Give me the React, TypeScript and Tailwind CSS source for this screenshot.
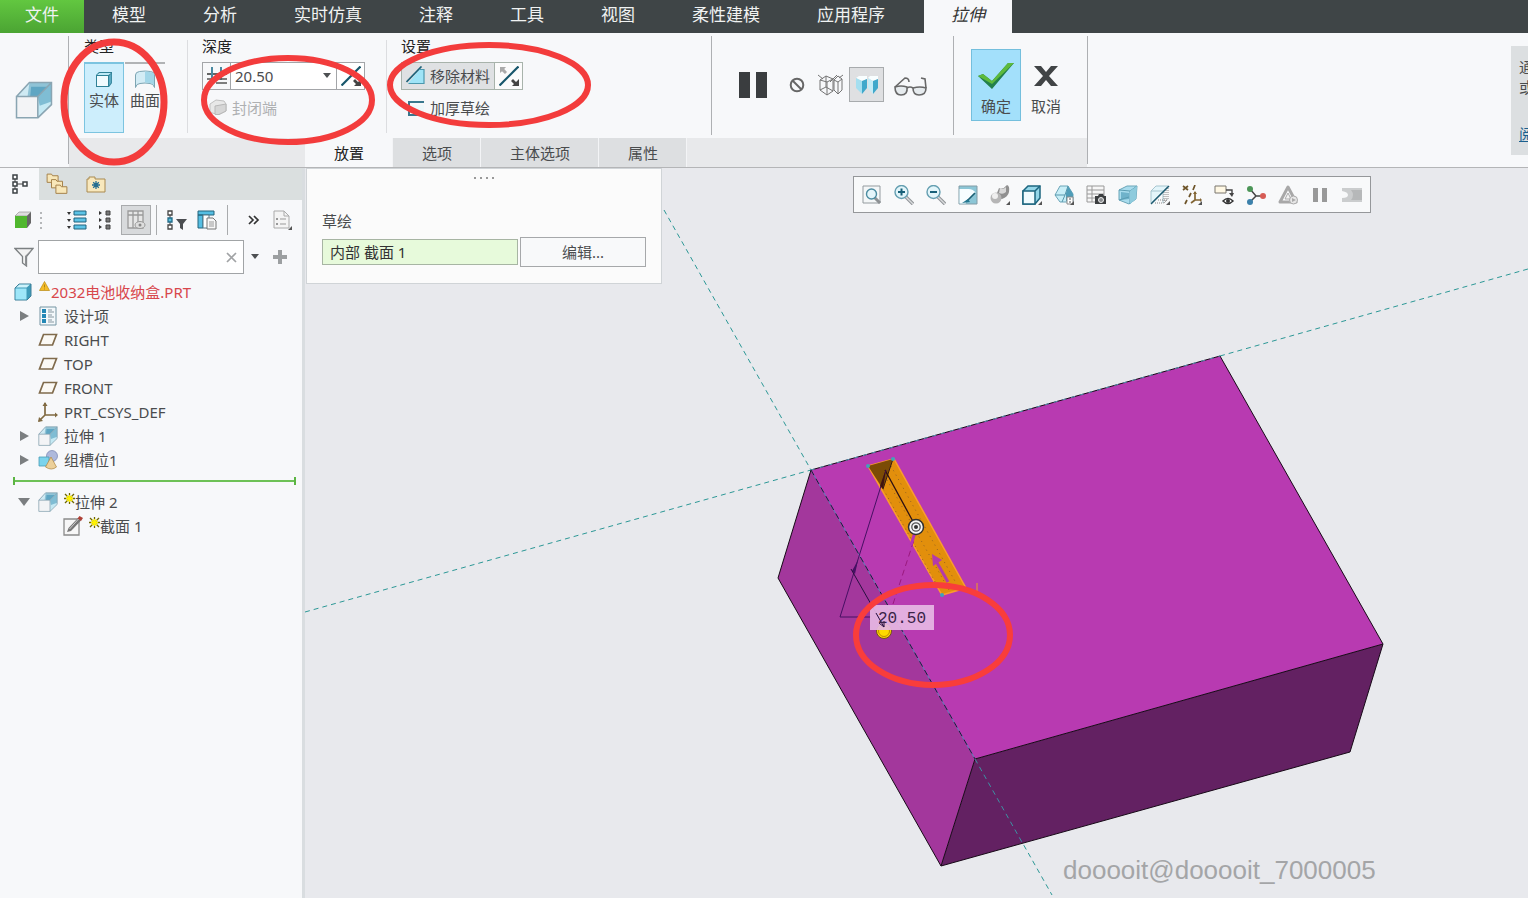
import React from 'react';

interface IconProps {
  children: React.ReactNode;
  size?: number;
}

// All small glyphs are drawn on a 20x20 grid
const Icon: React.FC<IconProps> = ({ children, size = 20 }) => (
  <svg width={size} height={size} viewBox="0 0 20 20" fill="none" className="block shrink-0" aria-hidden="true">
    {children}
  </svg>
);

const Corner = () => <path d="M20 16v4h-4z" fill="#555" />;

const ExtrudeIcon: React.FC<{ size?: number }> = ({ size }) => (
  <Icon size={size}>
    <path d="M.8 8.200 7.600.8H19.200L12 8.200z" fill="#8fc3d6" />
    <path d="M.8 8.200 7.600.8 6.600 8.200z" fill="#cfeaf3" />
    <path d="M8.500 3H17L12 8.200H8z" fill="#5fa6c3" />
    <path d="M12 8.200 19.200.8v11.600L12 19.400z" fill="#c4e9f4" />
    <path d="M12 8.200 19.200.8v10L13 13z" fill="#7fbdd4" />
    <path d="M.8 8.200H12v11.200H.8z" fill="#f3f4f6" />
    <path d="M.8 8.200H12v11.200H.8zM.8 8.200 7.600.8H19.200v11.600L12 19.400M12 8.200 19.200.8" stroke="#8aa5b2" strokeWidth=".8" />
  </Icon>
);

const SolidIcon = () => (
  <Icon>
    <path d="m2 5 3-3h13v11l-3 4H2z" fill="#2f8196" />
    <path d="M3 6h11v10H3z" fill="#f1fbfe" />
    <path d="m3 5 2.500-2H17l-2.500 2z" fill="#bfeaf6" />
    <path d="M15 6v9.500l2.300-3V3.500z" fill="#5aaac2" />
  </Icon>
);

const SurfaceIcon = () => (
  <Icon>
    <path d="M.5 17.500V5q0-3 4-3.500 6-1 11 0 4 .5 4 3v13q-1-4-4.500-4-5-1-10 0-3.500 0-4.500 4z" fill="#d3ecf5" stroke="#7da5b3" />
    <path d="M10 1.500q7 0 9 2.500v12q-1-3-4.500-3-2-.5-4.500-.5z" fill="#a2d6e8" />
  </Icon>
);

const DepthIcon = () => (
  <Icon>
    <path d="M5 1v13M14 1v13" stroke="#1d6d8c" strokeWidth="1.600" />
    <path d="M0 8h4M6 8h7M15 8h5" stroke="#333" strokeWidth="1.400" />
    <path d="M0 13h20M9 17h11" stroke="#555" strokeWidth="1.600" />
  </Icon>
);

const FlipIcon: React.FC<{ faded?: boolean }> = ({ faded }) => (
  <Icon>
    <path d="M19.500.5.500 19.500" stroke="#17566b" strokeWidth="2.200" />
    {faded && <path d="M1 1h6L5.200 3 8 6 6 8 3 5.200 1 7z" fill="#aaa" />}
    <path d="M20 20h-7l2-2-3-3 2-2 3 3 3-3z" fill="#444" />
  </Icon>
);

const CapIcon = () => (
  <Icon>
    <path d="m2 6 6-4 8 1 2 3v7l-7 3.500-9-2z" fill="#e8e8e8" stroke="#c0c0c0" />
    <path d="m7 8 11-2v7l-7 3.500H7z" fill="#d6d6d6" stroke="#b8b8b8" />
  </Icon>
);

const RemoveIcon = () => (
  <Icon>
    <path d="M2 17.500 14 3h4v14.500z" fill="#9fe4f7" />
    <path d="M14 3.500h4v14H2.500" stroke="#4b98ae" strokeWidth="1.200" />
    <path d="M.5 16 15.500.5" stroke="#1d6178" strokeWidth="1.700" />
  </Icon>
);

const ThickenIcon = () => (
  <Icon>
    <path d="M18 4H3v13h12" stroke="#39788e" strokeWidth="2" />
    <path d="M6 7h12v8H6z" fill="#edf8fb" />
  </Icon>
);

const PauseIcon = () => (
  <svg width="30" height="28" viewBox="0 0 30 28" className="block">
    <path d="M1 1h11v26H1zM18 1h11v26H18z" fill="#3a3d3f" />
  </svg>
);

const BlockedIcon = () => (
  <svg width="16" height="16" viewBox="0 0 16 16" fill="none" className="block">
    <circle cx="8" cy="8" r="6.300" stroke="#666" strokeWidth="2" />
    <path d="m3.500 3.500 9 9" stroke="#666" strokeWidth="2" />
  </svg>
);

const WireIcon = () => (
  <svg width="26" height="22" viewBox="0 0 26 22" fill="none" stroke="#747474" className="block">
    <path d="m2 6 7 2v13L2 16zM9 8l6-3v12l-6 4M2 6l6-4 7 3M2 16l6-3 7 4M8 2v11M16 6l4 2v12l-4-4zM20 8l4-3v11l-4 4M16 6l4-4 4 3M0 1l5 4M19 1l-7 7M25 1l-4 3" />
  </svg>
);

const SplitIcon = () => (
  <svg width="24" height="20" viewBox="0 0 24 20" className="block">
    <path d="m1 3 3-2h8v3l-5 2z" fill="#f9feff" />
    <path d="m1 3 6 3v13L1 13z" fill="#a5dff0" />
    <path d="m7 6 5-2v9l-5 6z" fill="#40a8cb" />
    <path d="m13 3 2-2h8v3l-5 2z" fill="#f9feff" />
    <path d="m13 3 5 3v13l-5-6z" fill="#c4ecf7" />
    <path d="m18 6 5-2v9l-5 6z" fill="#40a8cb" />
  </svg>
);

const GlassesIcon = () => (
  <svg width="36" height="22" viewBox="0 0 36 22" fill="none" stroke="#686868" strokeWidth="1.600" className="block">
    <path d="M2 11q6-2 12 0 1 8-6 8-6 0-6-8zM20 12q7-2 13 0 0 7-7 7-6 0-6-7z" fill="#e6ebee" />
    <path d="M14 12q3-2 6 0M2 11l10-9q4 0 4 4M33 12 32 3l-4-1" />
  </svg>
);

const CheckIcon = () => (
  <svg width="38" height="28" viewBox="0 0 38 28" className="block">
    <path d="m1 14 5-2 9 7L31 1h6L15 27z" fill="#23804b" />
    <path d="m1 14 5-2 9 7L31 1h6L15 22z" fill="#5dba3c" />
  </svg>
);

const CrossIcon = () => (
  <svg width="26" height="22" viewBox="0 0 26 22" className="block">
    <path d="M1 1h7l5 6 5-6h7l-9 10 9 10h-7l-5-6-5 6H1l9-10z" fill="#414446" />
  </svg>
);

const FolderIcon = () => (
  <Icon>
    <path d="M1 5h2V3h6v2h10v13H1z" fill="#f8e8bd" stroke="#a98a50" />
    <path d="M10 7v8M6 11h8M7.200 8.200l5.600 5.600M12.800 8.200l-5.600 5.600" stroke="#256e91" strokeWidth="1.300" />
  </Icon>
);

const FoldersIcon = () => (
  <Icon size={22}>
    {[[0, 0], [4, 5], [8, 10]].map(([x, y]) => (
      <path key={x} d={`M${x + 1} ${y + 3}v-2h4l1 1.500h5v6h-10z`} fill="#f8e7b9" stroke="#a5824b" strokeWidth=".9" />
    ))}
  </Icon>
);

const TreeTabIcon = () => (
  <Icon>
    <path d="M5 5v10M5 10h8" stroke="#444" />
    <path d="M3 1h4v4H3zM3 8h4v4H3zM3 15h4v4H3zM13 8h4v4h-4z" fill="#fff" stroke="#3d4245" strokeWidth="1.500" />
  </Icon>
);

const GreenBoxIcon = () => (
  <Icon>
    <path d="m2 6 4-4h12l-4 4z" fill="#ddd" stroke="#888" strokeWidth=".6" />
    <path d="m14 6 4-4v11l-4 5z" fill="#666" />
    <path d="M2 6h12v12H2z" fill="#50b72e" />
  </Icon>
);

const ExpandAllIcon = () => (
  <Icon>
    {[1, 8, 15].map((y) => (
      <g key={y}>
        <path d={`M0 ${y + 1}h4l-2 3z`} fill="#333" />
        <path d={`M7 ${y}h12v4H7z`} fill="#5cc3e6" stroke="#20627c" />
      </g>
    ))}
  </Icon>
);

const CollapseAllIcon = () => (
  <Icon>
    {[1, 8, 15].map((y) => (
      <g key={y}>
        <path d={`m4 ${y}l3 2-3 2z`} fill="#333" />
        <path d={`M11 ${y}h4v4h-4z`} fill="#777" stroke="#444" />
      </g>
    ))}
  </Icon>
);

const ColumnsIcon = () => (
  <Icon>
    <path d="M2 1h15v17H2zM2 5h15M7 1v17M12 1v17" fill="#e6e6e6" stroke="#9a9a9a" strokeWidth="1.300" />
    <ellipse cx="14" cy="15" rx="5" ry="3.500" fill="#ddd" stroke="#999" />
    <circle cx="14" cy="15" r="1.500" fill="#888" />
  </Icon>
);

const TreeFilterIcon = () => (
  <Icon>
    <path d="M3 3v14" stroke="#444" />
    <path d="M1 1h4v4H1zM1 15h4v4H1z" fill="#fff" stroke="#444" strokeWidth="1.300" />
    <path d="M1 8h4v4H1z" fill="#57bedf" stroke="#246a86" strokeWidth="1.300" />
    <path d="M9 9h11l-4 5v6l-3-2v-4z" fill="#4a4d50" />
  </Icon>
);

const TreeColumnsIcon = () => (
  <Icon>
    <path d="M1 1h16v4H1zM1 5h5v13H1z" fill="#55bee3" stroke="#25657d" />
    <path d="M6 5h6v13H6z" fill="#fff" stroke="#547889" />
    <path d="M10 8h6l3 3v8h-9z" fill="#f7f7f7" stroke="#777" />
    <path d="M12 12h5M12 14h5M12 16h5" stroke="#999" />
  </Icon>
);

const SettingsPageIcon = () => (
  <Icon>
    <path d="M2 1h10l5 5v12H2z" fill="#f4f4f4" stroke="#aaa" />
    <path d="M12 1v5h5" stroke="#aaa" />
    <path d="M8 9h6M8 14h6" stroke="#999" />
    <path d="M4 8h2v2H4zM4 13h2v2H4z" fill="#999" />
    <Corner />
  </Icon>
);

const FunnelIcon = () => (
  <Icon>
    <path d="M1 1.500h18l-6.500 8V19l-4-3V9.500z" fill="#f2f2f2" stroke="#7c8082" strokeWidth="1.300" />
    <path d="M19 1.500 12.500 9.500V19l-1.500-1V9z" fill="#8d9092" />
  </Icon>
);

const PartIcon = () => (
  <Icon>
    <path d="m2 6 4-4h12v12l-4 4H2z" fill="#3e9bb9" stroke="#3d7f98" />
    <path d="M2.500 6.500h11v11h-11z" fill="#9ee6f8" />
    <path d="m3 5.500 3.400-3H17l-3.300 3z" fill="#cdf3fb" />
  </Icon>
);

const DesignItemsIcon = () => (
  <Icon>
    <path d="M2 1h16v18H2z" fill="#f3f8fb" stroke="#7595a3" />
    <path d="M4 3h4v4H4zM4 8h4v4H4zM4 13h4v4H4z" fill="#2387b5" />
    <path d="M10 4h4M10 6h6M10 9h4M10 11h6M10 14h4M10 16h6" stroke="#8797a0" />
  </Icon>
);

const PlaneIcon = () => (
  <Icon>
    <path d="M5.500 4.500h13l-4 10.500h-13z" fill="#fbf9f4" stroke="#806b4c" strokeWidth="1.700" />
  </Icon>
);

const CsysIcon = () => (
  <Icon>
    <path d="M7 1v12h12M7 13l-6 6" stroke="#806a42" strokeWidth="1.700" />
    <path d="m4.500 4 2.500-4 2.500 4zM17 10.500l3 2.500-3 2.500zM0 20l1-5 4 4z" fill="#806a42" />
  </Icon>
);

const GroupIcon = () => (
  <Icon>
    <circle cx="14" cy="6" r="5.500" fill="#aeb9dc" stroke="#7683af" strokeWidth=".7" />
    <path d="M1 7h10v9H1z" fill="#7cd4ec" stroke="#4a9db6" strokeWidth=".8" />
    <path d="m13 7 5.500 10q-5 4-11 0z" fill="#ecd09a" stroke="#b48e4d" strokeWidth=".8" />
  </Icon>
);

const SketchIcon = () => (
  <Icon>
    <path d="M1 3h15v16H1z" fill="#f7f7f7" stroke="#8b8b8b" strokeWidth="1.300" />
    <path d="M4 16 5.500 12 15 2l3 2.500L8 15z" fill="#777" />
    <path d="m14.500 2.500 2-2.500L20 2l-2 3z" fill="#ae4036" />
    <path d="m6.500 13 9-10" stroke="#ccc" />
  </Icon>
);

const NewMark = () => (
  <svg width="11" height="11" viewBox="0 0 11 11" className="mt-[3px] block shrink-0 self-start">
    <path d="M5.500 0v11M0 5.500h11M1 1l9 9M10 1l-9 9" stroke="#6f6600" strokeWidth="1.300" />
    <path d="M5.500 2v7M2 5.500h7M3 3l5 5M8 3l-5 5" stroke="#fff200" strokeWidth="1.400" />
  </svg>
);

const WarnMark = () => (
  <svg width="11" height="10" viewBox="0 0 11 10" className="mt-px block shrink-0 self-start">
    <path d="M5.500.5 10.500 9.500H.5z" fill="#f6bd27" stroke="#b98a12" strokeWidth=".7" />
    <path d="M5.500 3.500v3M5.500 7.500v1" stroke="#b08413" />
  </svg>
);

const Arrow: React.FC<{ open?: boolean }> = ({ open }) => (
  <svg width="12" height="12" viewBox="0 0 12 12" className="block shrink-0">
    <path d={open ? 'M0 2h12L6 10z' : 'M2 1l9 5-9 5z'} fill="#7b7e80" />
  </svg>
);

const Caret = () => (
  <svg width="10" height="6" viewBox="0 0 10 6" className="block shrink-0">
    <path d="M1 0h8L5 5z" fill="#4d5052" />
  </svg>
);

const viewTools = [
  {
    name: '重新调整',
    icon: (
      <>
        <path d="M1 1h17v17H1z" fill="#f4f7f8" stroke="#949b9f" />
        <path d="m12 12 6 6" stroke="#8d9194" strokeWidth="3" />
        <circle cx="9.500" cy="9" r="5" fill="#e4f5fa" stroke="#4b8ca1" strokeWidth="1.400" />
      </>
    ),
  },
  {
    name: '放大',
    icon: (
      <>
        <path d="m12 12 7 7" stroke="#8f9396" strokeWidth="3.400" />
        <path d="m12 12 7 7" stroke="#dadcdd" strokeWidth="1.400" />
        <circle cx="7.500" cy="7" r="6.500" fill="#e2f5fa" stroke="#659fb1" strokeWidth="1.400" />
        <path d="M7.500 3.500v7M4 7h7" stroke="#176079" strokeWidth="2" />
      </>
    ),
  },
  {
    name: '缩小',
    icon: (
      <>
        <path d="m12 12 7 7" stroke="#8f9396" strokeWidth="3.400" />
        <path d="m12 12 7 7" stroke="#dadcdd" strokeWidth="1.400" />
        <circle cx="7.500" cy="7" r="6.500" fill="#e2f5fa" stroke="#659fb1" strokeWidth="1.400" />
        <path d="M4 7h7" stroke="#176079" strokeWidth="2" />
      </>
    ),
  },
  {
    name: '重画',
    icon: (
      <>
        <path d="M1 1h18v18H1z" fill="#8cc6d6" stroke="#829ca6" />
        <path d="M1.500 4h9q5 0 7 4l-10 10.500h-6z" fill="#f7fdff" />
        <path d="m8 17 9-9" stroke="#1c6074" strokeWidth="1.700" />
        <path d="m4 18 6-4 2 3z" fill="#247790" />
      </>
    ),
  },
  {
    name: '渲染',
    icon: (
      <>
        <path d="M9 3q4 2 8-3 3 1 2 7-1 5-7 7-5 0-5-6z" fill="#909090" />
        <path d="M10 3q4 2 6-1v5q-3 3-7 1z" fill="#d8d8d8" />
        <circle cx="6" cy="13" r="5.500" fill="#b6b6b6" />
        <circle cx="5" cy="11" r="3" fill="#efefef" />
        <Corner />
      </>
    ),
  },
  {
    name: '显示样式',
    icon: (
      <>
        <path d="m1 6 5-5h12v12l-5 6H1z" fill="#94d6e8" stroke="#1c667f" strokeWidth="1.500" />
        <path d="M1 6h12v13H1zM13 6l5-5" fill="#f0fbfe" stroke="#1c667f" strokeWidth="1.500" />
        <Corner />
      </>
    ),
  },
  {
    name: '已保存方向',
    icon: (
      <>
        <path d="M1 10 6 1h8l5 8v8H6z" fill="#c8eef7" stroke="#6ba5b8" />
        <path d="m14 1 5 8v7h-7V8z" fill="#4f9db8" />
        <path d="M1 10h10l3-9M11 10l-3 7" stroke="#5797ac" />
        <path d="M13 12h6v7h-6z" fill="#fff" stroke="#888" />
        <path d="M15 14h2M15 17h2" stroke="#555" />
        <Corner />
      </>
    ),
  },
  {
    name: '视图管理器',
    icon: (
      <>
        <path d="M1 1h17v16H1zM1 5h17M6 1v16M1 9h17M1 13h17" fill="#f7f7f7" stroke="#999" />
        <path d="M9 11h3l1-2h4l1 2h2v8H9z" fill="#3c3f41" />
        <circle cx="15" cy="15" r="2.500" fill="#8a8d90" stroke="#eee" />
      </>
    ),
  },
  {
    name: '透视图',
    icon: (
      <>
        <path d="m1 5 8-4h10l-1 13-7 5-10-4z" fill="#a9dced" stroke="#6ba5b8" />
        <path d="m3 7 8 1v6l-8 1z" fill="#6fb2ca" />
        <path d="m1 5 11 1v13M12 6l7-5M1 15l10-3" stroke="#5a9cb2" />
        <path d="M12 6 19 1l-1 13-6 5z" fill="#8ecbdd" />
      </>
    ),
  },
  {
    name: '截面',
    icon: (
      <>
        <path d="M1 18V6l5-5h12L1 18z" fill="#e3f5fa" stroke="#a6c5cf" />
        <path d="M1 6h12M13 6v12" stroke="#a6c5cf" />
        <path d="M14 18V7M18 3v11l-5 5M16 16V5M5 18h8M8 15h9" stroke="#888" strokeDasharray="1 1" />
        <path d="M19 1 1 19" stroke="#1d5b71" strokeWidth="1.500" />
        <Corner />
      </>
    ),
  },
  {
    name: '基准显示',
    icon: (
      <>
        <path d="m1 1 5 4M6 1 1 5M13 0l-2 5M9 8l-2 4M5 15l-2 4" stroke="#6d5428" strokeWidth="1.700" />
        <path d="M13 7v8h6M13 15l-4 3" stroke="#826534" strokeWidth="1.700" />
        <path d="m11 9 2-3 2 3zM18 13l2 2-2 2z" fill="#826534" />
        <Corner />
      </>
    ),
  },
  {
    name: '注释显示',
    icon: (
      <>
        <path d="M1 1h11v7H1z" fill="#fff8e4" stroke="#7a776e" />
        <path d="M12 5h6v5" stroke="#444" strokeWidth="1.400" />
        <path d="M15 8h5l-2 4z" fill="#444" />
        <path d="M9 16q5-5 10 0-5 5-10 0z" fill="#fff" stroke="#333" strokeWidth="1.500" />
        <circle cx="14" cy="16" r="2" fill="#333" />
      </>
    ),
  },
  {
    name: '旋转中心',
    icon: (
      <>
        <path d="m4 4 6 7h8M10 11l-6 6" stroke="#444" strokeWidth="1.500" />
        <circle cx="4" cy="4" r="3" fill="#4c9657" />
        <circle cx="4" cy="17" r="3" fill="#3c81ab" />
        <circle cx="17" cy="11" r="3" fill="#d65c55" />
      </>
    ),
  },
  {
    name: '仿真',
    icon: (
      <>
        <path d="M10 2 18 17H2z" stroke="#a8a8a8" strokeWidth="3" strokeLinejoin="round" />
        <path d="m10 8 3 6H7z" fill="#f4f4f4" stroke="#aaa" />
        <circle cx="15.500" cy="15" r="4" fill="#e7e7e7" stroke="#aaa" />
        <path d="m14 13 4 2-4 2z" fill="#aaa" />
      </>
    ),
  },
  {
    name: '暂停仿真',
    icon: <path d="M3 3h5v14H3zM12 3h5v14h-5z" fill="#999" />,
  },
  {
    name: '仿真结果',
    icon: (
      <>
        <path d="M0 3h20v14H0v-4q6 0 6-3T0 6z" fill="#cbcdce" />
        <path d="M9 5h11v10H9q4-5 0-10z" fill="#b6b8b9" />
      </>
    ),
  },
];

const menus = ['模型', '分析', '实时仿真', '注释', '工具', '视图', '柔性建模', '应用程序'];

const MenuBar = () => (
  <header className="flex h-[33px] overflow-hidden bg-[#3f4547] text-[17px] leading-[29px] whitespace-nowrap text-[#f0f2f2]">
    <button className="bg-linear-to-b from-[#62c740] to-[#4ba433] px-[25px] pb-1">文件</button>
    <nav className="flex gap-px">
      {menus.map((m) => (
        <button key={m} className="px-7 pb-1">
          {m}
        </button>
      ))}
    </nav>
    <button className="ml-[11px] bg-[#f7f8fa] px-[27px] pb-1 text-[#333] italic">拉伸</button>
  </header>
);

const Divider = () => <div className="my-[3px] w-px shrink-0 bg-[#aeb0b3]" />;
const LightDivider = () => <div className="mt-[7px] mb-[5px] w-px shrink-0 bg-[#dcdde0]" />;

const GroupTitle: React.FC<{ children: React.ReactNode }> = ({ children }) => (
  <h2 className="h-[29px] pt-[3px] leading-5 text-[#222]">{children}</h2>
);

const tabs = ['放置', '选项', '主体选项', '属性'];

const Ribbon = () => (
  <section className="relative flex h-[135px] overflow-hidden border-b border-[#b4b5b7] bg-[#f7f8fa]">
    <div className="flex w-[68px] shrink-0 items-center justify-center">
      <ExtrudeIcon size={38} />
    </div>
    <Divider />

    <div className="flex shrink-0 flex-col">
      <div className="flex h-[105px]">
        <div className="w-[118px] pl-[15px]">
          <GroupTitle>类型</GroupTitle>
          <div className="flex gap-px">
            <button
              aria-pressed="true"
              className="flex h-[71px] w-10 flex-col items-center border border-t-2 border-[#7cc4e0] bg-[#cdeefc] pt-[6px]"
            >
              <SolidIcon />
              <span className="leading-5">实体</span>
            </button>
            <button className="flex h-[71px] w-10 flex-col items-center border-t-2 border-[#b1b3b5] pt-[6px]">
              <SurfaceIcon />
              <span className="leading-5">曲面</span>
            </button>
          </div>
        </div>
        <LightDivider />

        <div className="w-[198px] pl-[14px]">
          <GroupTitle>深度</GroupTitle>
          <div className="flex h-7 w-[163px] border border-[#a3a5a8] bg-white">
            <button aria-label="深度选项" className="flex w-7 items-center justify-center border-r border-[#a3a5a8] bg-[#f7f8fa]">
              <DepthIcon />
            </button>
            <input aria-label="深度值" defaultValue="20.50" className="w-[91px] pl-1 outline-none" />
            <button aria-label="最近使用的值" className="flex items-center pr-1">
              <Caret />
            </button>
            <button aria-label="反向深度" className="flex flex-1 items-center justify-center border-l border-[#a3a5a8]">
              <FlipIcon />
            </button>
          </div>
          <button disabled className="mt-2 flex items-center gap-1 pl-[6px] leading-5 text-[#aeb0b2]">
            <CapIcon />
            封闭端
          </button>
        </div>
        <LightDivider />

        <div className="w-[324px] pl-[14px]">
          <GroupTitle>设置</GroupTitle>
          <div className="flex h-7">
            <button aria-pressed="true" className="flex items-center gap-1 border border-[#a8b3ab] bg-[#dfe1e3] px-1">
              <RemoveIcon />
              移除材料
            </button>
            <button aria-label="反向材料侧" className="-ml-px flex w-[29px] items-center justify-center border border-[#a8b3ab] bg-[#fbfbfb]">
              <FlipIcon faded />
            </button>
          </div>
          <button className="mt-2 flex items-center gap-1 pl-[5px] leading-5">
            <ThickenIcon />
            加厚草绘
          </button>
        </div>
        <Divider />

        <div className="flex w-[241px] items-center pb-[2px] pl-[26px]">
          <button aria-label="暂停">
            <PauseIcon />
          </button>
          <button aria-label="无预览" className="ml-[21px]">
            <BlockedIcon />
          </button>
          <button aria-label="分离预览" className="ml-[13px]">
            <WireIcon />
          </button>
          <button
            aria-label="连接预览"
            aria-pressed="true"
            className="ml-[5px] flex h-[35px] w-[35px] items-center justify-center border border-[#a8abad] bg-[#dfe0e2]"
          >
            <SplitIcon />
          </button>
          <button aria-label="特征预览" className="ml-[9px] pt-1">
            <GlassesIcon />
          </button>
        </div>
        <Divider />

        <div className="flex w-[133px] items-start pt-4 pl-[17px]">
          <button className="flex h-[72px] w-[50px] flex-col items-center border border-[#74bfdd] bg-[#a3e0fb] pt-3">
            <CheckIcon />
            <span className="mt-[6px] leading-5">确定</span>
          </button>
          <button className="flex h-[72px] w-[50px] flex-col items-center pt-4">
            <CrossIcon />
            <span className="mt-[9px] leading-5">取消</span>
          </button>
        </div>
      </div>

      <div className="flex flex-1 bg-[#e8e9eb] pl-[236px]">
        {tabs.map((t, i) => (
          <button
            key={t}
            className={`border-r border-[#f3f4f6] pt-[2px] pr-7 pl-[29px] ${i === 0 ? 'bg-[#f7f8fa] text-[#222]' : 'bg-[#dddfe1]'}`}
          >
            {t}
          </button>
        ))}
      </div>
    </div>
    <Divider />

    <aside className="mt-[13px] ml-auto h-[109px] w-[17px] overflow-hidden bg-[#dcdfe1] pt-[11px] pl-2 leading-5 whitespace-nowrap">
      <p>通</p>
      <p>或</p>
      <a href="#read" className="mt-[27px] block text-[#1b5f8e] underline">
        阅
      </a>
    </aside>

    <svg width="620" height="135" viewBox="0 33 620 135" fill="none" stroke="#f33c3c" className="pointer-events-none absolute top-0 left-0">
      <ellipse cx="114" cy="102" rx="50" ry="60" strokeWidth="7" />
      <ellipse cx="288" cy="100" rx="84" ry="42" strokeWidth="6" />
      <ellipse cx="489" cy="85" rx="99" ry="40" strokeWidth="6" />
    </svg>
  </section>
);

interface TreeItem {
  label: string;
  icon: React.ReactNode;
  expand?: 'open' | 'closed';
  isNew?: boolean;
  child?: boolean;
}

const treeTop: TreeItem[] = [
  { label: '设计项', icon: <DesignItemsIcon />, expand: 'closed' },
  { label: 'RIGHT', icon: <PlaneIcon /> },
  { label: 'TOP', icon: <PlaneIcon /> },
  { label: 'FRONT', icon: <PlaneIcon /> },
  { label: 'PRT_CSYS_DEF', icon: <CsysIcon /> },
  { label: '拉伸 1', icon: <ExtrudeIcon />, expand: 'closed' },
  { label: '组槽位1', icon: <GroupIcon />, expand: 'closed' },
];

const treeBottom: TreeItem[] = [
  { label: '拉伸 2', icon: <ExtrudeIcon />, expand: 'open', isNew: true },
  { label: '截面 1', icon: <SketchIcon />, isNew: true, child: true },
];

const TreeRow: React.FC<{ item: TreeItem }> = ({ item }) => (
  <li className={`flex h-6 items-center ${item.child ? 'pl-[43px]' : 'pl-[18px]'}`}>
    <span className="w-5">{item.expand && <Arrow open={item.expand === 'open'} />}</span>
    {item.icon}
    <span className="w-[6px]" />
    {item.isNew && <NewMark />}
    <span>{item.label}</span>
  </li>
);

const Sidebar = () => (
  <aside className="flex w-[305px] shrink-0 flex-col border-r-[3px] border-[#d9dde0] bg-[#f7f8fa]">
    <div className="flex h-8 bg-[#dadfdf]">
      <button aria-label="模型树" className="flex w-[39px] items-center justify-center bg-[#f7f8fa]">
        <TreeTabIcon />
      </button>
      <button aria-label="文件夹浏览器" className="flex w-9 items-center justify-center">
        <FoldersIcon />
      </button>
      <button aria-label="收藏夹" className="ml-[11px] flex w-5 items-center justify-center">
        <FolderIcon />
      </button>
    </div>

    <div className="flex h-10 items-center pl-[13px]">
      <button aria-label="显示"><GreenBoxIcon /></button>
      <svg width="4" height="18" viewBox="0 0 4 18" className="ml-[6px]">
        <path d="M1 1h2v2H1zM1 6h2v2H1zM1 11h2v2H1zM1 16h2v2H1z" fill="#b5b7b9" />
      </svg>
      <button aria-label="全部展开" className="ml-6"><ExpandAllIcon /></button>
      <button aria-label="全部折叠" className="ml-2"><CollapseAllIcon /></button>
      <button
        aria-label="显示列"
        aria-pressed="true"
        className="ml-[6px] flex h-[30px] w-[30px] items-center justify-center border border-[#a9abad] bg-[#d8dadc]"
      >
        <ColumnsIcon />
      </button>
      <div className="ml-[5px] h-[30px] w-px bg-[#a9abad]" />
      <button aria-label="树过滤器" className="ml-[10px]"><TreeFilterIcon /></button>
      <button aria-label="树列" className="ml-[10px]"><TreeColumnsIcon /></button>
      <div className="ml-[10px] h-[30px] w-px bg-[#a9abad]" />
      <button aria-label="更多" className="ml-5">
        <svg width="12" height="10" viewBox="0 0 12 10" fill="none" stroke="#333" strokeWidth="1.700">
          <path d="m1 1 4 4-4 4M6 1l4 4-4 4" />
        </svg>
      </button>
      <button aria-label="设置" className="ml-3"><SettingsPageIcon /></button>
    </div>

    <div className="flex items-center pl-[14px]">
      <FunnelIcon />
      <div className="ml-1 flex h-[34px] w-[206px] items-center border border-[#a1a4a6] bg-white">
        <input aria-label="过滤" className="min-w-0 flex-1 px-2 outline-none" />
        <button aria-label="清除" className="pr-[6px]">
          <svg width="11" height="11" viewBox="0 0 11 11" stroke="#a1a3a5" strokeWidth="1.700">
            <path d="m1 1 9 9M10 1l-9 9" />
          </svg>
        </button>
      </div>
      <button aria-label="过滤历史" className="ml-[6px]"><Caret /></button>
      <button aria-label="添加" className="ml-[13px]">
        <svg width="14" height="14" viewBox="0 0 14 14">
          <path d="M5 0h4v5h5v4H9v5H5V9H0V5h5z" fill="#9c9fa1" />
        </svg>
      </button>
    </div>

    <ul className="mt-[6px]">
      <li className="flex h-6 items-center pl-[13px] text-[#d8474c]">
        <PartIcon />
        <span className="w-[6px]" />
        <WarnMark />
        <span className="pl-px">2032电池收纳盒.PRT</span>
      </li>
      {treeTop.map((item) => (
        <TreeRow key={item.label} item={item} />
      ))}
      <li className="my-[5px] mr-[6px] ml-[13px] flex h-2 items-center border-x-2 border-[#5bb543]">
        <div className="h-[2px] flex-1 bg-[#6dc156]" />
      </li>
      {treeBottom.map((item) => (
        <TreeRow key={item.label} item={item} />
      ))}
    </ul>
  </aside>
);

const Model = () => (
  <svg
    viewBox="305 168 1223 730"
    preserveAspectRatio="xMidYMid slice"
    fill="none"
    className="absolute inset-0 h-full w-full"
    aria-label="模型"
  >
    <g stroke="#2c9896" strokeDasharray="5 4">
      <path d="M664 210 811 470" />
      <path d="M305 612 811 470" />
      <path d="M1220 356 1528 269" />
      <path d="M975 759 1052 895" />
    </g>

    <path d="M811 470 1220 356 1383 644 975 759z" fill="#b83ab1" />
    <path d="M811 470 975 759 941 866 778 578z" fill="#a3379c" />
    <path d="M975 759 1383 644 1350 752 941 866z" fill="#632162" />
    <path d="M811 470 778 578 941 866 1350 752 1383 644 1220 356zM941 866l34-107 408-115" stroke="#170817" />
    <path d="M811 470 1220 356" stroke="#5795b5" strokeDasharray="4 5" />
    <path d="M811 470 975 759" stroke="#5c79b8" />
    <path d="M811 470 975 759" stroke="#241239" strokeDasharray="6 4" />
    <path d="M975 759 1023 844" stroke="#3d91a2" strokeDasharray="5 4" />

    {/* removed slot with its preview geometry */}
    <path d="M868 466 894 459 966 588 942 595z" fill="#e28f0c" stroke="#fb9b2f" strokeWidth="1.500" />
    <path d="M868 466 893 459 883 489z" fill="#7b4b05" />
    <path d="M881 485 939 589M891 466 956 583M887 480 949 590" stroke="#956322" strokeDasharray="1 4" />
    <path d="M893 459 883 489" stroke="#391c12" />
    <path d="M885 470 916 527" stroke="#2c1014" strokeWidth="1.300" />
    <path d="M886 470 840 617H871" stroke="#461063" />
    <path d="m886 469-6 17 3 3z" fill="#40150f" />
    <path d="m858 560-6 11 3 3z" fill="#461063" />
    <path d="M851 569 884 627" stroke="#271040" />
    <path d="M893 604 914 540" stroke="#9a197e" strokeDasharray="6 4" />
    <path d="m911 545 5-16" stroke="#b632b5" strokeWidth="3" />
    <path d="M948 582 936 561" stroke="#b43aaa" strokeWidth="3" />
    <path d="m932 554 10 6-9 6z" fill="#b43aaa" />
    <path d="M977 583v8" stroke="#ef9d20" />
    <circle cx="868" cy="466" r="2" fill="#41a1ba" />
    <circle cx="893" cy="459" r="2" fill="#41a1ba" />
    <circle cx="942" cy="595" r="2" fill="#41a1ba" />

    <circle cx="916" cy="527" r="7.500" fill="#f5f5f5" stroke="#303030" strokeWidth="1.500" />
    <circle cx="916" cy="527" r="4.200" stroke="#555" strokeWidth="1.300" />
    <circle cx="916" cy="527" r="2" fill="#333" />

    <circle cx="884" cy="631" r="7.500" fill="#ffda00" stroke="#72501c" />
    <circle cx="884" cy="631" r="5.500" stroke="#c08b00" />
    <path d="M870 605h64v25h-64z" fill="#e6b8e4" fillOpacity=".92" />
    <path d="m876 613 8 14m-5-4 5 4v-6" stroke="#271040" />
    <text x="878" y="623" fill="#3a2347" className="font-['Liberation_Mono',monospace] text-[16px]">
      20.50
    </text>
    <ellipse cx="933" cy="635" rx="77" ry="50" stroke="#f93d3b" strokeWidth="6" />

    <text x="1063" y="879" fill="#a4a5a7" className="font-['Liberation_Sans',sans-serif] text-[26px]">
      dooooit@dooooit_7000005
    </text>
  </svg>
);

const Viewport = () => (
  <main className="relative flex-1 overflow-hidden bg-[#e8e9ed]">
    <Model />

    <section className="absolute top-0 left-px w-[356px] border border-[#d0d4d7] bg-[#fbfbfb] px-[15px] pb-4">
      <div className="flex justify-center gap-1 pt-2">
        {[0, 1, 2, 3].map((i) => (
          <span key={i} className="h-[2px] w-[2px] bg-[#999]" />
        ))}
      </div>
      <label htmlFor="sketch" className="mt-8 block leading-5">
        草绘
      </label>
      <div className="mt-[6px] flex items-center gap-[2px]">
        <input
          id="sketch"
          readOnly
          defaultValue="内部 截面 1"
          className="h-[26px] w-[196px] border border-[#a7b5a3] bg-[#e7fadb] px-[7px] pb-[2px] text-[#333] outline-none"
        />
        <button className="h-[30px] w-[126px] border border-[#a6a8aa] bg-[#f8f9fa]">编辑...</button>
      </div>
    </section>

    <div className="absolute top-2 left-[548px] flex h-[37px] items-center border border-[#95979a] bg-[#f8f9fa] px-[2px]">
      {viewTools.map((t) => (
        <button key={t.name} aria-label={t.name} className="flex w-8 items-center justify-center">
          <Icon>{t.icon}</Icon>
        </button>
      ))}
    </div>
  </main>
);

export default function App() {
  return (
    <div className="flex min-h-screen flex-col overflow-hidden bg-[#f7f8fa] font-['Noto_Sans','Noto_Sans_CJK_SC',sans-serif] text-[15px] text-[#4a4c4e]">
      <MenuBar />
      <Ribbon />
      <div className="flex flex-1">
        <Sidebar />
        <Viewport />
      </div>
    </div>
  );
}
